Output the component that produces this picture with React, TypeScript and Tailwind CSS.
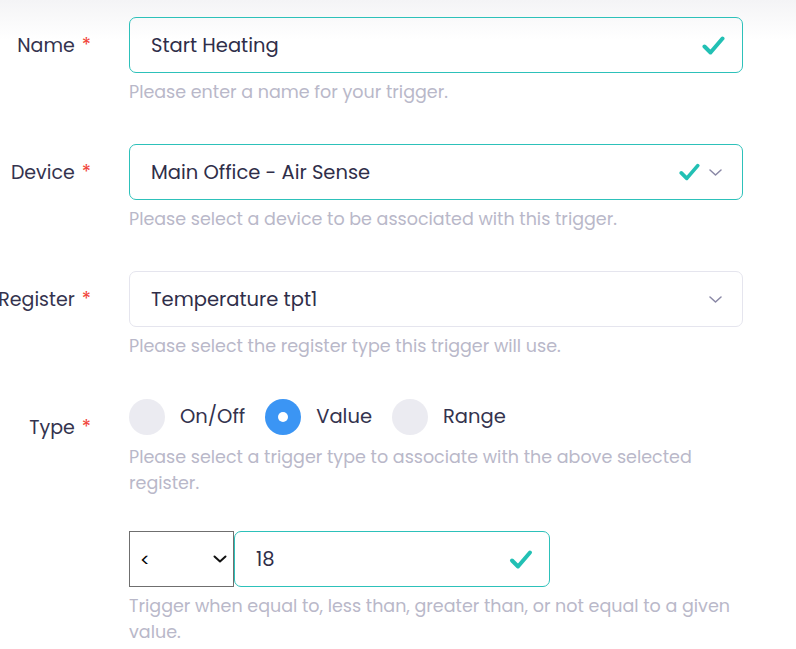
import React from 'react';

const Check: React.FC<{ className?: string }> = ({ className }) => (
    <svg viewBox="0 0 23 21" className={className} fill="none">
        <path d="M2.5 11.5 L8.5 17.5 L20.5 3.5" stroke="#22c0b4" strokeWidth="4" strokeLinecap="round" strokeLinejoin="round" />
    </svg>
);

const Chevron: React.FC<{ className?: string }> = ({ className }) => (
    <svg viewBox="0 0 13 7" className={className} fill="none">
        <path d="M1 1 L6.5 6 L12 1" stroke="#8a88a6" strokeWidth="1.5" strokeLinecap="round" strokeLinejoin="round" />
    </svg>
);

const Label: React.FC<{ text?: string }> = ({ text }) => (
    <div className="w-[129px] shrink-0 h-[56px] pt-[2px] flex items-center justify-end pr-[38px] whitespace-nowrap text-[19px] text-[#34334e]">
        {text && (
            <>
                {text}
                <span className="ml-[7px] text-[#f1443a]">*</span>
            </>
        )}
    </div>
);

const Help: React.FC<{ children: React.ReactNode; className?: string }> = ({ children, className }) => (
    <p className={`text-[17.5px] leading-[26px] text-[#b9b8c9] ${className ?? 'mt-[6px]'}`}>{children}</p>
);

const Radio: React.FC<{ label: string; checked?: boolean }> = ({ label, checked }) => (
    <div className="flex items-center gap-[15px]">
        {checked ? (
            <span className="w-[36px] h-[36px] rounded-full bg-[#3b95f4] flex items-center justify-center">
                <span className="w-[10px] h-[10px] rounded-full bg-white" />
            </span>
        ) : (
            <span className="w-[36px] h-[36px] rounded-full bg-[#ebebf1]" />
        )}
        <span className="text-[19.5px] text-[#34334e]">{label}</span>
    </div>
);

const App: React.FC = () => {
    return (
        <div className="min-h-screen bg-[linear-gradient(to_bottom,#f4f4f6_0px,#ffffff_40px)] font-['Poppins','Open_Sans',sans-serif] pt-[17px]">
            {/* Name */}
            <div className="flex mb-[39px]">
                <Label text="Name" />
                <div className="w-[614px]">
                    <div className="h-[56px] border border-[#2dc1ba] rounded-[7px] pl-[21px] pr-[17px] flex items-center justify-between text-[19.5px] text-[#2f2e49]">
                        <span className="pt-[2px]">Start Heating</span>
                        <Check className="w-[23px] h-[21px]" />
                    </div>
                    <Help>Please enter a name for your trigger.</Help>
                </div>
            </div>

            {/* Device */}
            <div className="flex mb-[39px]">
                <Label text="Device" />
                <div className="w-[614px]">
                    <div className="h-[56px] border border-[#2dc1ba] rounded-[7px] pl-[21px] pr-[20px] flex items-center text-[19.5px] text-[#2f2e49]">
                        <span className="flex-1 pt-[2px]">Main Office - Air Sense</span>
                        <Check className="w-[21px] h-[20px] mr-[9px]" />
                        <Chevron className="w-[13px] h-[7px]" />
                    </div>
                    <Help>Please select a device to be associated with this trigger.</Help>
                </div>
            </div>

            {/* Register */}
            <div className="flex mb-[40px]">
                <Label text="Register" />
                <div className="w-[614px]">
                    <div className="h-[56px] border border-[#e5e5ee] rounded-[7px] pl-[21px] pr-[20px] flex items-center text-[19.5px] text-[#2f2e49]">
                        <span className="flex-1 pt-[2px]">Temperature tpt1</span>
                        <Chevron className="w-[13px] h-[7px]" />
                    </div>
                    <Help>Please select the register type this trigger will use.</Help>
                </div>
            </div>

            {/* Type */}
            <div className="flex mb-[35px]">
                <Label text="Type" />
                <div className="w-[614px]">
                    <div className="flex items-center gap-[20px] h-[36px]">
                        <Radio label="On/Off" />
                        <Radio label="Value" checked />
                        <Radio label="Range" />
                    </div>
                    <Help className="mt-[9px]">Please select a trigger type to associate with the above selected register.</Help>
                </div>
            </div>

            {/* Value */}
            <div className="flex">
                <Label />
                <div className="w-[614px]">
                    <div className="flex h-[56px]">
                        <div className="w-[105px] border border-[#6f6f6f] flex items-center justify-between pl-[10px] pr-[6px] text-[18px] text-black">
                            <span>&lt;</span>
                            <svg viewBox="0 0 14 8" className="w-[14px] h-[8px]" fill="none">
                                <path d="M1.5 1.5 L7 6.5 L12.5 1.5" stroke="#111" strokeWidth="2" strokeLinecap="round" strokeLinejoin="round" />
                            </svg>
                        </div>
                        <div className="w-[316px] border border-[#2dc1ba] rounded-[7px] pl-[21px] pr-[16px] flex items-center justify-between text-[19.5px] text-[#2f2e49]">
                            <span className="pt-[2px]">18</span>
                            <Check className="w-[24px] h-[21px]" />
                        </div>
                    </div>
                    <Help>Trigger when equal to, less than, greater than, or not equal to a given value.</Help>
                </div>
            </div>
        </div>
    );
};

export default App;
